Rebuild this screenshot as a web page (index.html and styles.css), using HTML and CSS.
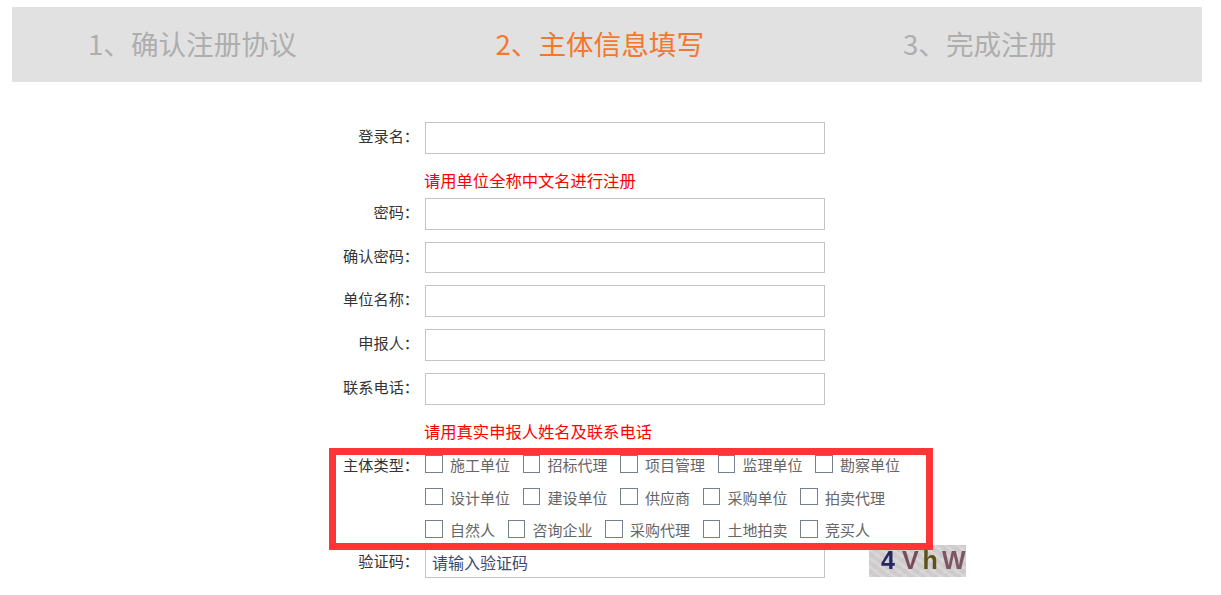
FILE: index.html
```html
<!DOCTYPE html>
<html lang="zh-CN">
<head>
<meta charset="utf-8">
<title>主体信息填写</title>
<link rel="stylesheet" href="styles.css">
</head>
<body>
<div class="page">
  <div class="steps">
    <div class="step">1、确认注册协议</div>
    <div class="step active">2、主体信息填写</div>
    <div class="step">3、完成注册</div>
  </div>
  <form class="form">
    <div class="row"><label class="label">登录名：</label><input class="input" type="text"></div>
    <div class="hint hint-first">请用单位全称中文名进行注册</div>
    <div class="row"><label class="label">密码：</label><input class="input" type="password"></div>
    <div class="row"><label class="label">确认密码：</label><input class="input" type="password"></div>
    <div class="row"><label class="label">单位名称：</label><input class="input" type="text"></div>
    <div class="row"><label class="label">申报人：</label><input class="input" type="text"></div>
    <div class="row"><label class="label">联系电话：</label><input class="input" type="text"></div>
    <div class="hint hint-second">请用真实申报人姓名及联系电话</div>
    <div class="types">
      <div class="label">主体类型：</div>
      <div class="type-lines">
        <div class="type-line">
          <label class="type"><span class="box"></span>施工单位</label>
          <label class="type"><span class="box"></span>招标代理</label>
          <label class="type"><span class="box"></span>项目管理</label>
          <label class="type"><span class="box"></span>监理单位</label>
          <label class="type"><span class="box"></span>勘察单位</label>
        </div>
        <div class="type-line">
          <label class="type"><span class="box"></span>设计单位</label>
          <label class="type"><span class="box"></span>建设单位</label>
          <label class="type"><span class="box"></span>供应商</label>
          <label class="type"><span class="box"></span>采购单位</label>
          <label class="type"><span class="box"></span>拍卖代理</label>
        </div>
        <div class="type-line">
          <label class="type"><span class="box"></span>自然人</label>
          <label class="type"><span class="box"></span>咨询企业</label>
          <label class="type"><span class="box"></span>采购代理</label>
          <label class="type"><span class="box"></span>土地拍卖</label>
          <label class="type"><span class="box"></span>竞买人</label>
        </div>
      </div>
    </div>
    <div class="row captcha-row">
      <label class="label">验证码：</label>
      <input class="input code" type="text" value="请输入验证码">
      <div class="captcha"><span class="c1">4</span><span class="c2">V</span><span class="c3">h</span><span class="c4">W</span></div>
    </div>
  </form>
  <div class="highlight"></div>
</div>
</body>
</html>
```
FILE: styles.css
```css
* { box-sizing: border-box; }
html, body { margin: 0; padding: 0; background: #fff; }
body {
  font-family: "Noto Sans CJK SC", "Noto Sans", "Liberation Sans", sans-serif;
  font-size: 15px;
  color: #333;
}
.page {
  position: relative;
  width: 1221px;
  height: 595px;
  padding: 7px 19px 0 12px;
  overflow: hidden;
}
.steps {
  display: flex;
  height: 75px;
  background: #e1e1e1;
  padding-left: 76px;
}
.step {
  flex: none;
  width: 407.5px;
  font-size: 27.6px;
  line-height: 73px;
  color: #aeaeae;
}
.step.active { color: #f5772b; }
.form {
  padding: 40px 0 0 313px;
}
.row {
  display: flex;
  align-items: flex-start;
  height: 31.75px;
  margin-bottom: 12px;
}
.label {
  width: 94px;
  margin-right: 6px;
  flex: none;
  text-align: right;
  font-size: 15.2px;
  line-height: 26px;
  color: #333;
  white-space: nowrap;
}
.input {
  flex: none;
  width: 400px;
  height: 100%;
  border: 1px solid #c4c4c4;
  background: #fff;
  padding: 0 6px;
  font: inherit;
  outline: none;
}
.hint {
  margin-left: 99px;
  color: #f00;
  font-size: 16.3px;
  line-height: 20px;
  height: 20px;
  white-space: nowrap;
}
.hint-first { margin-top: 16px; margin-bottom: 8px; }
.hint-second { margin-top: 16px; }
.types {
  display: flex;
  margin-top: 10px;
  height: 96px;
}
.type-line {
  display: flex;
  gap: 12.5px;
  height: 32.5px;
  padding-top: 4.5px;
}
.type {
  display: flex;
  align-items: flex-start;
  height: 18px;
  color: #666;
  line-height: 20px;
  white-space: nowrap;
}
.box {
  width: 17.5px;
  height: 17.5px;
  margin-right: 7.5px;
  border: 1px solid #767f8c;
  background: #fff;
  flex: none;
}
.captcha-row {
  height: 31px;
}
.code { color: #3a4a6e; font-size: 16px; }
.captcha {
  flex: none;
  width: 97px;
  height: 32px;
  margin: -3px 0 0 44px;
  transform: translateY(1px);
  padding-left: 12px;
  display: flex;
  align-items: center;
  gap: 4px;
  font-family: "Liberation Sans", sans-serif;
  font-weight: 700;
  font-size: 25px;
  background-color: #d3d1d1;
  background-image:
    repeating-linear-gradient(37deg, rgba(255,255,255,.12) 0 3px, rgba(165,165,165,.1) 3px 7px),
    repeating-linear-gradient(-52deg, rgba(230,205,215,.16) 0 4px, rgba(180,180,180,.1) 4px 9px);
}
.captcha span { filter: blur(.4px); }
.c1 { color: #252563; margin-right: 3px; }
.c2 { color: #7b4a5c; }
.c3 { color: #5f5218; }
.c4 { color: #7d5563; }
.highlight {
  position: absolute;
  left: 329px;
  top: 448px;
  width: 604px;
  height: 102px;
  border: 7px solid #fc3636;
  pointer-events: none;
}
```
